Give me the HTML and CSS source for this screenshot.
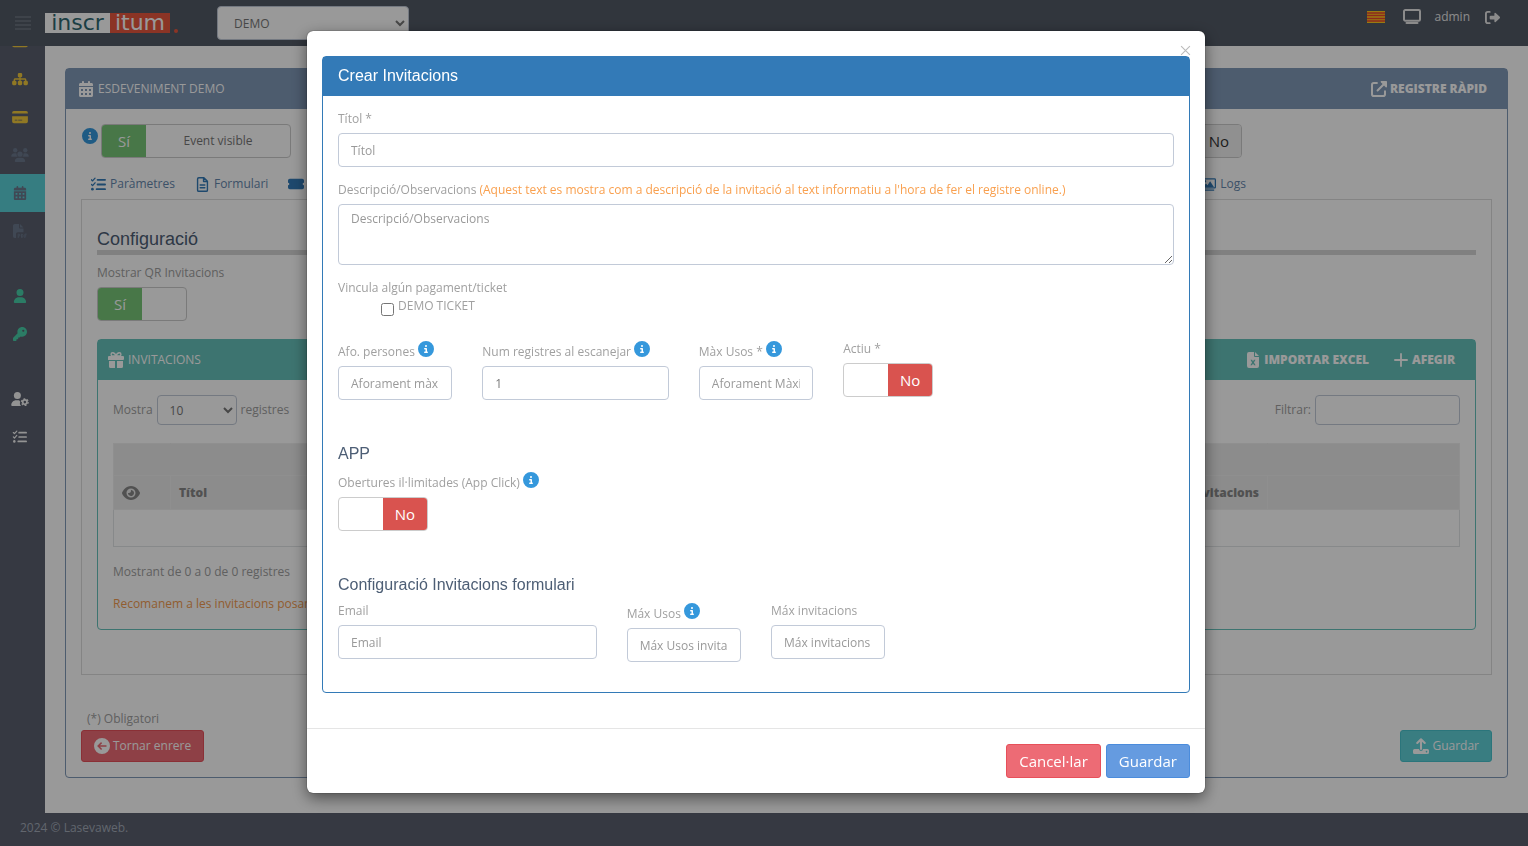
FILE: index.html
```html
<!DOCTYPE html>
<html lang="ca">
<head>
<meta charset="utf-8">
<title>Inscritum</title>
<link rel="stylesheet" href="styles.css">
</head>
<body>
<svg class="sprite" aria-hidden="true">
  <symbol id="info" viewBox="0 0 512 512"><path d="M256 512A256 256 0 1 0 256 0a256 256 0 1 0 0 512zM216 336h24V272H216c-13.3 0-24-10.7-24-24s10.7-24 24-24h48c13.3 0 24 10.7 24 24v88h8c13.3 0 24 10.7 24 24s-10.7 24-24 24H216c-13.3 0-24-10.7-24-24s10.7-24 24-24zm40-208a32 32 0 1 1 0 64 32 32 0 1 1 0-64z"/></symbol>
  <symbol id="calendar" viewBox="0 0 448 512"><path fill-rule="evenodd" d="M128 0c17.700 0 32 14.300 32 32V64H288V32c0-17.700 14.300-32 32-32s32 14.300 32 32V64h48c26.500 0 48 21.500 48 48v48H0V112C0 85.500 21.500 64 48 64H96V32c0-17.700 14.300-32 32-32zM0 192H448V464c0 26.500-21.500 48-48 48H48c-26.500 0-48-21.500-48-48zM64 256h64v64H64zM192 256h64v64h-64zM320 256h64v64h-64zM64 384h64v64H64zM192 384h64v64h-64zM320 384h64v64h-64z"/></symbol>
  <symbol id="sitemap" viewBox="0 0 576 512"><path d="M208 80c0-26.500 21.500-48 48-48h64c26.500 0 48 21.500 48 48v64c0 26.500-21.500 48-48 48h-8v40H464c30.900 0 56 25.100 56 56v32h8c26.500 0 48 21.500 48 48v64c0 26.500-21.500 48-48 48H464c-26.500 0-48-21.500-48-48V368c0-26.500 21.500-48 48-48h8V288c0-4.400-3.600-8-8-8H312v40h8c26.500 0 48 21.500 48 48v64c0 26.500-21.500 48-48 48H256c-26.500 0-48-21.500-48-48V368c0-26.500 21.500-48 48-48h8V280H112c-4.400 0-8 3.600-8 8v32h8c26.500 0 48 21.500 48 48v64c0 26.500-21.500 48-48 48H48c-26.500 0-48-21.500-48-48V368c0-26.500 21.500-48 48-48h8V288c0-30.900 25.100-56 56-56H264V192h-8c-26.500 0-48-21.500-48-48V80z"/></symbol>
  <symbol id="card" viewBox="0 0 576 512"><path fill-rule="evenodd" d="M64 32h448q64 0 64 64v32H0V96q0-64 64-64zM0 224h576v192q0 64-64 64H64q-64 0-64-64zM96 352v32h96v-32zM224 352v32h144v-32z"/></symbol>
  <symbol id="users" viewBox="0 0 640 512"><circle cx="144" cy="80" r="80"/><circle cx="512" cy="80" r="80"/><circle cx="320" cy="224" r="96"/><path d="M0 299c0-59 48-107 107-107h43c16 0 31 4 45 10a128 128 0 0 0 41 118H21c-12 0-21-9-21-21zM405 320a128 128 0 0 0 42-118c13-6 28-10 43-10h43c59 0 107 48 107 107 0 12-9 21-21 21zM128 485c0-74 60-133 133-133h118c73 0 133 59 133 133 0 15-12 27-27 27H155c-15 0-27-12-27-27z"/></symbol>
  <symbol id="pdf" viewBox="0 0 512 512"><path d="M0 64C0 29 29 0 64 0h160v128q0 32 32 32h128v144H176c-35 0-64 29-64 64v144H64c-35 0-64-29-64-64zM384 128H256V0z"/><path d="M190 512V370h24c52 0 52 76 0 76h-24M310 370v126h20c50 0 50-126 0-126zM434 512V370h68M434 436h54" fill="none" stroke="currentColor" stroke-width="34"/></symbol>
  <symbol id="user" viewBox="0 0 448 512"><path d="M224 256A128 128 0 1 0 224 0a128 128 0 1 0 0 256zm-45.700 48C79.800 304 0 383.800 0 482.300C0 498.700 13.300 512 29.700 512H418.300c16.400 0 29.700-13.300 29.700-29.700C448 383.800 368.200 304 269.700 304H178.300z"/></symbol>
  <symbol id="key" viewBox="0 0 512 512"><path d="M336 352c97.200 0 176-78.800 176-176S433.200 0 336 0S160 78.800 160 176c0 18.700 2.900 36.800 8.300 53.700L7 391c-4.500 4.500-7 10.600-7 17v80c0 13.300 10.700 24 24 24h80c13.300 0 24-10.700 24-24V448h40c13.300 0 24-10.700 24-24V384h40c6.400 0 12.500-2.500 17-7l33.300-33.300c16.900 5.400 35 8.300 53.700 8.300zM376 96a40 40 0 1 1 0 80 40 40 0 1 1 0-80z"/></symbol>
  <symbol id="usergear" viewBox="0 0 640 512"><circle cx="224" cy="128" r="128"/><path d="M178 304h108c12 20 30 38 44 48-30 60-10 120 36 160H30c-17 0-30-13-30-30 0-98 80-178 178-178z"/><circle cx="496" cy="370" r="78" fill="none" stroke="currentColor" stroke-width="64"/><circle cx="496" cy="370" r="122" fill="none" stroke="currentColor" stroke-width="46" stroke-dasharray="64 64"/></symbol>
  <symbol id="tasks" viewBox="0 0 512 512"><path d="M12 92l42 42 84-96M12 252l42 42 84-96" fill="none" stroke="currentColor" stroke-width="44" stroke-linecap="round" stroke-linejoin="round"/><circle cx="48" cy="416" r="46"/><path d="M224 96h256M224 256h256M192 416h288" fill="none" stroke="currentColor" stroke-width="62" stroke-linecap="round"/></symbol>
  <symbol id="file" viewBox="0 0 384 512"><path d="M64 24h176l120 120v304q0 40-40 40H64q-40 0-40-40V64q0-40 40-40zM228 24v128h128M112 272h160M112 368h160" fill="none" stroke="currentColor" stroke-width="48" stroke-linejoin="round" stroke-linecap="round"/></symbol>
  <symbol id="ticket" viewBox="0 0 576 512"><path d="M64 64h448q64 0 64 64v80a48 48 0 0 0 0 96v80q0 64-64 64H64q-64 0-64-64v-80a48 48 0 0 0 0-96v-80q0-64 64-64z"/></symbol>
  <symbol id="images" viewBox="0 0 576 512"><rect x="24" y="40" width="528" height="350" rx="30" fill="none" stroke="currentColor" stroke-width="48"/><circle cx="150" cy="130" r="45"/><path d="M80 350l110-130 60 65L350 130l145 220zM70 450h436v50H70z"/></symbol>
  <symbol id="external" viewBox="0 0 512 512"><path d="M190 64H90q-58 0-58 58v300q0 58 58 58h300q58 0 58-58V325M210 302L450 62" fill="none" stroke="currentColor" stroke-width="64" stroke-linecap="round"/><path d="M320 0h168q24 0 24 24v168q-20 24-42 4L316 42q-20-22 4-42z"/></symbol>
  <symbol id="gift" viewBox="0 0 512 512"><path d="M32 128h448q32 0 32 32v64q0 32-32 32H0v-96q0-32 32-32zM32 288h192v224H80q-48 0-48-48zM288 288h192v176q0 48-48 48H288z"/><path d="M256 128c-20-60-55-104-106-104-68 0-68 104 0 104zM256 128c20-60 55-104 106-104 68 0 68 104 0 104z" fill="none" stroke="currentColor" stroke-width="46"/></symbol>
  <symbol id="excel" viewBox="0 0 384 512"><path fill-rule="evenodd" d="M64 0h160v128q0 32 32 32h128v288q0 64-64 64H64q-64 0-64-64V64Q0 0 64 0zM256 0l128 128H256zM112 248l50 88-54 88h50l34-58 34 58h50l-54-88 50-88h-50l-30 54-30-54z"/></symbol>
  <symbol id="plus" viewBox="0 0 448 512"><path d="M224 62v388M30 256h388" fill="none" stroke="currentColor" stroke-width="58" stroke-linecap="round"/></symbol>
  <symbol id="eye" viewBox="0 0 576 512"><path d="M288 32c-80.800 0-145.500 36.800-192.600 80.600C48.600 156 17.300 208 2.500 243.700c-3.300 7.900-3.300 16.700 0 24.600C17.300 304 48.600 356 95.400 399.400C142.500 443.200 207.200 480 288 480s145.500-36.800 192.600-80.600c46.800-43.500 78.100-95.400 93-131.100c3.300-7.900 3.300-16.700 0-24.600c-14.900-35.700-46.200-87.700-93-131.100C433.500 68.800 368.800 32 288 32zM144 256a144 144 0 1 1 288 0 144 144 0 1 1 -288 0zm144-64c0 35.300-28.700 64-64 64c-7.100 0-13.900-1.200-20.300-3.300c-5.500-1.800-11.900 1.600-11.700 7.400c.3 6.900 1.300 13.800 3.200 20.700c13.700 51.200 66.400 81.600 117.600 67.900s81.600-66.400 67.900-117.600c-11.100-41.500-47.800-69.400-88.600-71.100c-5.800-.2-9.200 6.100-7.400 11.700c2.100 6.400 3.300 13.200 3.300 20.300z"/></symbol>
  <symbol id="back" viewBox="0 0 512 512"><path fill-rule="evenodd" d="M256 0a256 256 0 1 1 0 512a256 256 0 1 1 0-512zM226 130L100 256l126 126 34-34-68-68h208v-48H192l68-68z"/></symbol>
  <symbol id="upload" viewBox="0 0 512 512"><path d="M256 350V50M136 160L256 40l120 120" fill="none" stroke="currentColor" stroke-width="66" stroke-linecap="round" stroke-linejoin="round"/><path fill-rule="evenodd" d="M48 352h144q8 60 64 60t64-60h144q48 0 48 48v64q0 48-48 48H48q-48 0-48-48v-64q0-48 48-48zM432 408a24 24 0 1 0 1 0z"/></symbol>
  <symbol id="screen" viewBox="0 0 576 512"><rect x="32" y="32" width="512" height="340" rx="40" fill="none" stroke="currentColor" stroke-width="64"/><path d="M112 448h352" stroke="currentColor" stroke-width="64" stroke-linecap="round"/></symbol>
  <symbol id="logout" viewBox="0 0 512 512"><path d="M160 64H96q-64 0-64 64v256q0 64 64 64h64" fill="none" stroke="currentColor" stroke-width="64" stroke-linecap="round"/><path d="M192 192h128v-64q4-46 44-24l140 130q16 22 0 44L364 408q-40 22-44-24v-64H192q-32 0-32-32v-64q0-32 32-32z"/></symbol>
  <symbol id="bars" viewBox="0 0 16 14"><path d="M0 1h16M0 5h16M0 9h16M0 13h16" stroke="currentColor"/></symbol>
  <symbol id="close" viewBox="0 0 10 10"><path d="M1 1l8 8M9 1L1 9" stroke="currentColor"/></symbol>
</svg>

<div class="page">
  <header class="topbar">
    <button class="menu-btn" aria-label="Menú"><svg><use href="#bars"/></svg></button>
    <a class="logo" href="#"><span class="logo-a">inscr</span><span class="logo-b">itum</span><span class="logo-dot"></span></a>
    <select class="event-select" aria-label="Esdeveniment"><option>DEMO</option></select>
    <nav class="user-nav">
      <svg class="flag" viewBox="0 0 18 12" role="img" aria-label="Català"><path fill="#ffcd1c" d="M0 0h18v12H0z"/><path d="M0 2h18M0 4.500h18M0 7.500h18M0 10h18" stroke="#ec4630" stroke-width="1.400"/></svg>
      <svg class="ic-18"><use href="#screen"/></svg>
      <a href="#">admin</a>
      <svg class="ic-15"><use href="#logout"/></svg>
    </nav>
  </header>

  <div class="middle">
    <nav class="sidebar">
      <a class="side yellow" href="#"><svg><use href="#card"/></svg></a>
      <a class="side yellow" href="#"><svg><use href="#sitemap"/></svg></a>
      <a class="side yellow" href="#"><svg><use href="#card"/></svg></a>
      <a class="side slate" href="#"><svg><use href="#users"/></svg></a>
      <a class="side slate active" href="#"><svg><use href="#calendar"/></svg></a>
      <a class="side slate" href="#"><svg><use href="#pdf"/></svg></a>
      <a class="side green group" href="#"><svg><use href="#user"/></svg></a>
      <a class="side green" href="#"><svg><use href="#key"/></svg></a>
      <a class="side light group" href="#"><svg><use href="#usergear"/></svg></a>
      <a class="side light" href="#"><svg><use href="#tasks"/></svg></a>
    </nav>

    <main class="content">
      <section class="card blue">
        <div class="card-head">
          <span class="head-title"><svg class="ic-16"><use href="#calendar"/></svg>ESDEVENIMENT DEMO</span>
          <a class="head-link" href="#"><svg class="ic-16"><use href="#external"/></svg>REGISTRE RÀPID</a>
        </div>
        <div class="card-body">
          <div class="switch-row">
            <svg class="info"><use href="#info"/></svg>
            <button class="switch wide" role="switch" aria-checked="true"><span class="on">Sí</span><span class="text">Event visible</span></button>
            <button class="switch right" role="switch" aria-checked="false"><span class="grey">No</span></button>
          </div>
          <nav class="tabs">
            <a href="#"><svg class="ic-15"><use href="#tasks"/></svg>Paràmetres</a>
            <a href="#"><svg class="ic-15"><use href="#file"/></svg>Formulari</a>
            <a href="#"><svg class="ic-16"><use href="#ticket"/></svg>P</a>
            <a class="last" href="#"><svg class="ic-15"><use href="#images"/></svg>Logs</a>
          </nav>
          <div class="tab-box">
            <h2>Configuració</h2>
            <span class="field-label" id="qr">Mostrar QR Invitacions</span>
            <button class="switch" role="switch" aria-checked="true" aria-labelledby="qr"><span class="on">Sí</span><span></span></button>
            <section class="card teal">
              <div class="card-head">
                <span class="head-title"><svg class="ic-16"><use href="#gift"/></svg>INVITACIONS</span>
                <span class="head-links">
                  <a class="head-link" href="#"><svg class="ic-16"><use href="#excel"/></svg>IMPORTAR EXCEL</a>
                  <a class="head-link" href="#"><svg class="ic-16"><use href="#plus"/></svg>AFEGIR</a>
                </span>
              </div>
              <div class="card-body">
                <div class="table-tools">
                  <label>Mostra <select class="count"><option>10</option></select> registres</label>
                  <label>Filtrar: <input class="filter" type="search"></label>
                </div>
                <table>
                  <thead>
                    <tr class="filters"><th class="c-eye"></th><th></th><th class="c-act"></th></tr>
                    <tr><th><svg class="ic-18"><use href="#eye"/></svg></th><th><span class="ends"><span>Títol</span><span>Invitacions</span></span></th><th></th></tr>
                  </thead>
                  <tbody><tr><td colspan="3"></td></tr></tbody>
                </table>
                <p class="count-text">Mostrant de 0 a 0 de 0 registres</p>
                <p class="hint">Recomanem a les invitacions posar</p>
              </div>
            </section>
          </div>
          <p class="required">(*) Obligatori</p>
          <div class="actions">
            <button class="btn red"><svg class="ic-16"><use href="#back"/></svg>Tornar enrere</button>
            <button class="btn cyan"><svg class="ic-16"><use href="#upload"/></svg>Guardar</button>
          </div>
        </div>
      </section>
    </main>
  </div>
  <footer class="footer">2024 © Lasevaweb.</footer>
</div>

<div class="backdrop">
  <form class="modal" role="dialog" aria-labelledby="modal-title">
    <button class="close" type="button" aria-label="Tancar"><svg><use href="#close"/></svg></button>
    <section class="panel">
      <h4 class="panel-head" id="modal-title">Crear Invitacions</h4>
      <div class="panel-body">
        <label class="field-label" for="titol">Títol *</label>
        <input class="control" id="titol" type="text" placeholder="Títol">
        <label class="field-label spaced" for="desc">Descripció/Observacions <span class="orange">(Aquest text es mostra com a descripció de la invitació al text informatiu a l'hora de fer el registre online.)</span></label>
        <textarea class="control" id="desc" placeholder="Descripció/Observacions"></textarea>
        <span class="field-label spaced">Vincula algún pagament/ticket</span>
        <label class="ticket"><input type="checkbox"><span>DEMO TICKET</span></label>

        <div class="grid people">
          <div class="s2">
            <label class="field-label" for="afo">Afo. persones <svg class="info"><use href="#info"/></svg></label>
            <input class="control" id="afo" type="text" placeholder="Aforament màxim">
          </div>
          <div class="s3">
            <label class="field-label" for="num">Num registres al escanejar <svg class="info"><use href="#info"/></svg></label>
            <input class="control" id="num" type="text" value="1">
          </div>
          <div class="s2">
            <label class="field-label" for="usos">Màx Usos * <svg class="info"><use href="#info"/></svg></label>
            <input class="control" id="usos" type="text" placeholder="Aforament Màxim">
          </div>
          <div class="s2">
            <span class="field-label" id="actiu">Actiu *</span>
            <button class="switch" type="button" role="switch" aria-checked="false" aria-labelledby="actiu"><span></span><span class="off">No</span></button>
          </div>
        </div>

        <h4 class="sub">APP</h4>
        <span class="field-label" id="obert">Obertures il·limitades (App Click) <svg class="info"><use href="#info"/></svg></span>
        <button class="switch" type="button" role="switch" aria-checked="false" aria-labelledby="obert"><span></span><span class="off">No</span></button>

        <h4 class="sub">Configuració Invitacions formulari</h4>
        <div class="grid">
          <div class="s4">
            <label class="field-label" for="email">Email</label>
            <input class="control" id="email" type="email" placeholder="Email">
          </div>
          <div class="s2">
            <label class="field-label" for="mu">Máx Usos <svg class="info"><use href="#info"/></svg></label>
            <input class="control" id="mu" type="text" placeholder="Máx Usos invitació">
          </div>
          <div class="s2">
            <label class="field-label" for="mi">Máx invitacions</label>
            <input class="control" id="mi" type="text" placeholder="Máx invitacions">
          </div>
        </div>
      </div>
    </section>
    <div class="modal-foot">
      <button class="btn big red" type="button">Cancel·lar</button>
      <button class="btn big blue-btn" type="button">Guardar</button>
    </div>
  </form>
</div>
</body>
</html>
```
FILE: styles.css
```css
* { box-sizing: border-box; }
body { margin: 0; font: 12px/16px "Open Sans", "Liberation Sans", sans-serif; font-feature-settings: "locl" 0; color: #a0a0a0; background: #fff; overflow: hidden; }
svg { fill: currentColor; display: block; flex: none; }
a { color: inherit; text-decoration: none; }
p, h2, h4 { margin: 0; }
button, input, select, textarea { font: inherit; }
.sprite { display: none; }
.ic-15 { width: 15px; height: 15px; }
.ic-16 { width: 16px; height: 16px; }
.ic-18 { width: 18px; height: 16px; }
.info { width: 16px; height: 16px; color: #3598dc; }

.page { min-height: 100vh; display: flex; flex-direction: column; }
.topbar { height: 46px; background: #525a66; display: flex; align-items: center; padding: 0 28px 0 15px; }
.menu-btn { border: 0; background: none; padding: 0; color: #7f8692; }
.menu-btn svg { width: 16px; height: 14px; }
.logo { display: flex; margin-left: 14px; font: 22px/20px "DejaVu Sans", sans-serif; align-items: flex-end; }
.logo span { height: 20px; text-align: center; }
.logo .logo-a { width: 65px; background: #fff; color: #2d6871; }
.logo .logo-b { width: 60px; background: #e8573f; color: #fff; }
.logo .logo-dot { width: 4px; height: 4px; margin-left: 4px; border-radius: 2px; background: #e8573f; }
.event-select { width: 192px; height: 34px; margin-left: 39px; padding: 0 12px; border: 1px solid #c2cad8; border-radius: 4px; background: #fff; color: #777; }
.user-nav { margin-left: auto; margin-bottom: 12px; display: flex; align-items: center; color: #e8e8e8; }
.flag { width: 18px; height: 12px; margin-right: 18px; }
.user-nav a { margin: 0 15px 0 13px; }

.middle { flex: 1; display: flex; }
.sidebar { width: 45px; background: #5a5f6e; overflow: hidden; padding-bottom: 20px; }
.side { height: 38px; padding-right: 5px; display: flex; align-items: center; justify-content: center; }
.side:first-child { margin-top: -24px; }
.side svg { width: 18px; height: 14px; }
.side.group { margin-top: 27px; }
.side.active { background: #5ad0d8; }
.yellow { color: #f1c93d; }
.slate { color: #6b788c; }
.green { color: #48cfa8; }
.light { color: #f5f5f5; }
.content { flex: 1; min-width: 0; padding: 22px 20px 35px; background: #fff; }
.footer { height: 33px; padding: 7px 20px; background: #5a5f6e; color: #a3abb8; }

.card { border: 1px solid; border-radius: 4px; }
.card.blue { border-color: #8099b8; }
.card.teal { border-color: #67c2bb; margin-top: 18px; }
.card-head { height: 40px; padding: 0 20px 0 12px; display: flex; align-items: center; justify-content: space-between; color: #fff; }
.blue > .card-head { background: #8099b8; }
.teal > .card-head { background: #67c2bb; padding-left: 10px; }
.head-title, .head-link { display: flex; align-items: center; gap: 4px; }
.head-link { font-weight: 800; gap: 3px; }
.head-links { display: flex; gap: 24px; }
.card-body { padding: 15px; }

.switch { display: inline-flex; width: 90px; height: 34px; padding: 0; border: 1px solid #ccc; border-radius: 4px; background: #fff; overflow: hidden; font-size: 15px; line-height: 32px; color: #333; vertical-align: top; }
.switch span { flex: 1; height: 32px; }
.switch .on { background: #79c679; color: #fff; }
.switch .off { background: #d9534f; color: #fff; }
.switch .grey { background: #f0f0f0; padding-left: 44px; }
.switch.wide { width: 190px; }
.switch.wide .on { flex: 0 0 44px; }
.switch .text { font-size: 12px; color: #777; }
.switch-row { display: flex; gap: 3px; }
.switch-row .info { margin: 4px 0 0 1px; }
.switch.right { margin-left: auto; margin-right: 250px; }
.tabs { display: flex; gap: 20px; padding: 0 10px; margin-top: 18px; height: 23px; color: #6587ad; }
.tabs svg { color: #337ab7; }
.tabs a { display: flex; gap: 4px; height: 16px; align-items: center; }
.tabs .last { margin-left: auto; margin-right: 236px; }
.tab-box { border: 1px solid #ddd; padding: 28px 15px 44px; }
h2 { font: 18px/22px "Liberation Sans", sans-serif; color: #4d5e75; border-bottom: 5px solid #d5d5d5; margin-bottom: 10px; }
.field-label { display: block; margin-bottom: 6px; }
.table-tools { display: flex; justify-content: space-between; height: 48px; }
.table-tools label { display: flex; gap: 4px; height: 30px; align-items: center; }
.count { width: 80px; height: 30px; padding: 0 8px; border: 1px solid #c2cad8; border-radius: 4px; background: #fff; color: #777; }
.filter { width: 145px; height: 30px; border: 1px solid #c2cad8; border-radius: 4px; background: #fff; }
table { width: 100%; table-layout: fixed; border-collapse: collapse; border: 1px solid #e1e4e6; }
th { height: 34px; padding: 0 8px; border: 1px solid #eee; background: #e9e9e9; color: #888; text-align: left; font-weight: 800; }
td { height: 37px; }
.filters th { height: 32px; }
.filters th:first-child, .filters th:nth-child(2) { border-right-color: #e9e9e9; }
.c-eye { width: 57px; }
.c-act { width: 192px; }
.ends { display: flex; justify-content: space-between; }
.count-text { margin-top: 17px; }
.hint { margin: 16px 0 2px; color: #f29b50; }
.required { margin: 36px 6px 3px; }
.actions { display: flex; justify-content: space-between; }
.btn { display: flex; align-items: center; gap: 3px; height: 32px; padding: 0 12px; border: 1px solid; border-radius: 3px; color: #fff; }
.btn.red { background: #ed6b75; border-color: #e7505a; }
.btn.cyan { background: #5fd0d8; border-color: #48c4cd; }
.btn.blue-btn { background: #659be0; border-color: #4b8cdc; }
.btn.big { height: 34px; font-size: 15px; }

.backdrop { position: fixed; inset: 0; padding: 31px 16px 0 0; background: rgba(0, 0, 0, .4); display: flex; justify-content: center; align-items: flex-start; }
.modal { position: relative; width: 898px; max-width: 100%; background: #fff; border-radius: 6px; box-shadow: 0 5px 15px rgba(0, 0, 0, .5), 0 0 1px #000; }
.close { position: absolute; right: 14px; top: 14px; padding: 0; border: 0; background: none; color: #bbb; }
.close svg { width: 11px; height: 11px; }
.panel { margin: 25px 15px 35px; border: 1px solid #337ab7; border-radius: 4px; }
.panel-head { padding: 9px 15px 10px; background: #337ab7; color: #fff; font: 16px/20px "Liberation Sans", sans-serif; }
.panel-body { padding: 15px 15px 30px; }
.control { display: block; width: 100%; height: 34px; padding: 6px 12px; border: 1px solid #c2cad8; border-radius: 4px; background: #fff; color: #777; }
.control::placeholder { color: #999; }
textarea.control { height: 61px; }
.spaced { margin-top: 15px; }
.spaced + .ticket { margin-top: -4px; }
.orange { color: #f9a04f; }
.ticket { display: flex; gap: 4px; padding-left: 43px; }
.ticket input { width: 13px; height: 13px; margin: 5px 0 0; }
.grid { display: grid; grid-template-columns: repeat(12, 1fr); column-gap: 30px; }
.people { margin-top: 25px; }
.s2 { grid-column: span 2; }
.s3 { grid-column: span 3; }
.s4 { grid-column: span 4; }
.field-label .info { display: inline-block; vertical-align: -1px; }
.sub { margin: 44px 0 8px; font: 16px/20px "Liberation Sans", sans-serif; color: #4d5e75; }
.modal-foot { display: flex; justify-content: flex-end; gap: 5px; padding: 15px; border-top: 1px solid #e5e5e5; }
```
